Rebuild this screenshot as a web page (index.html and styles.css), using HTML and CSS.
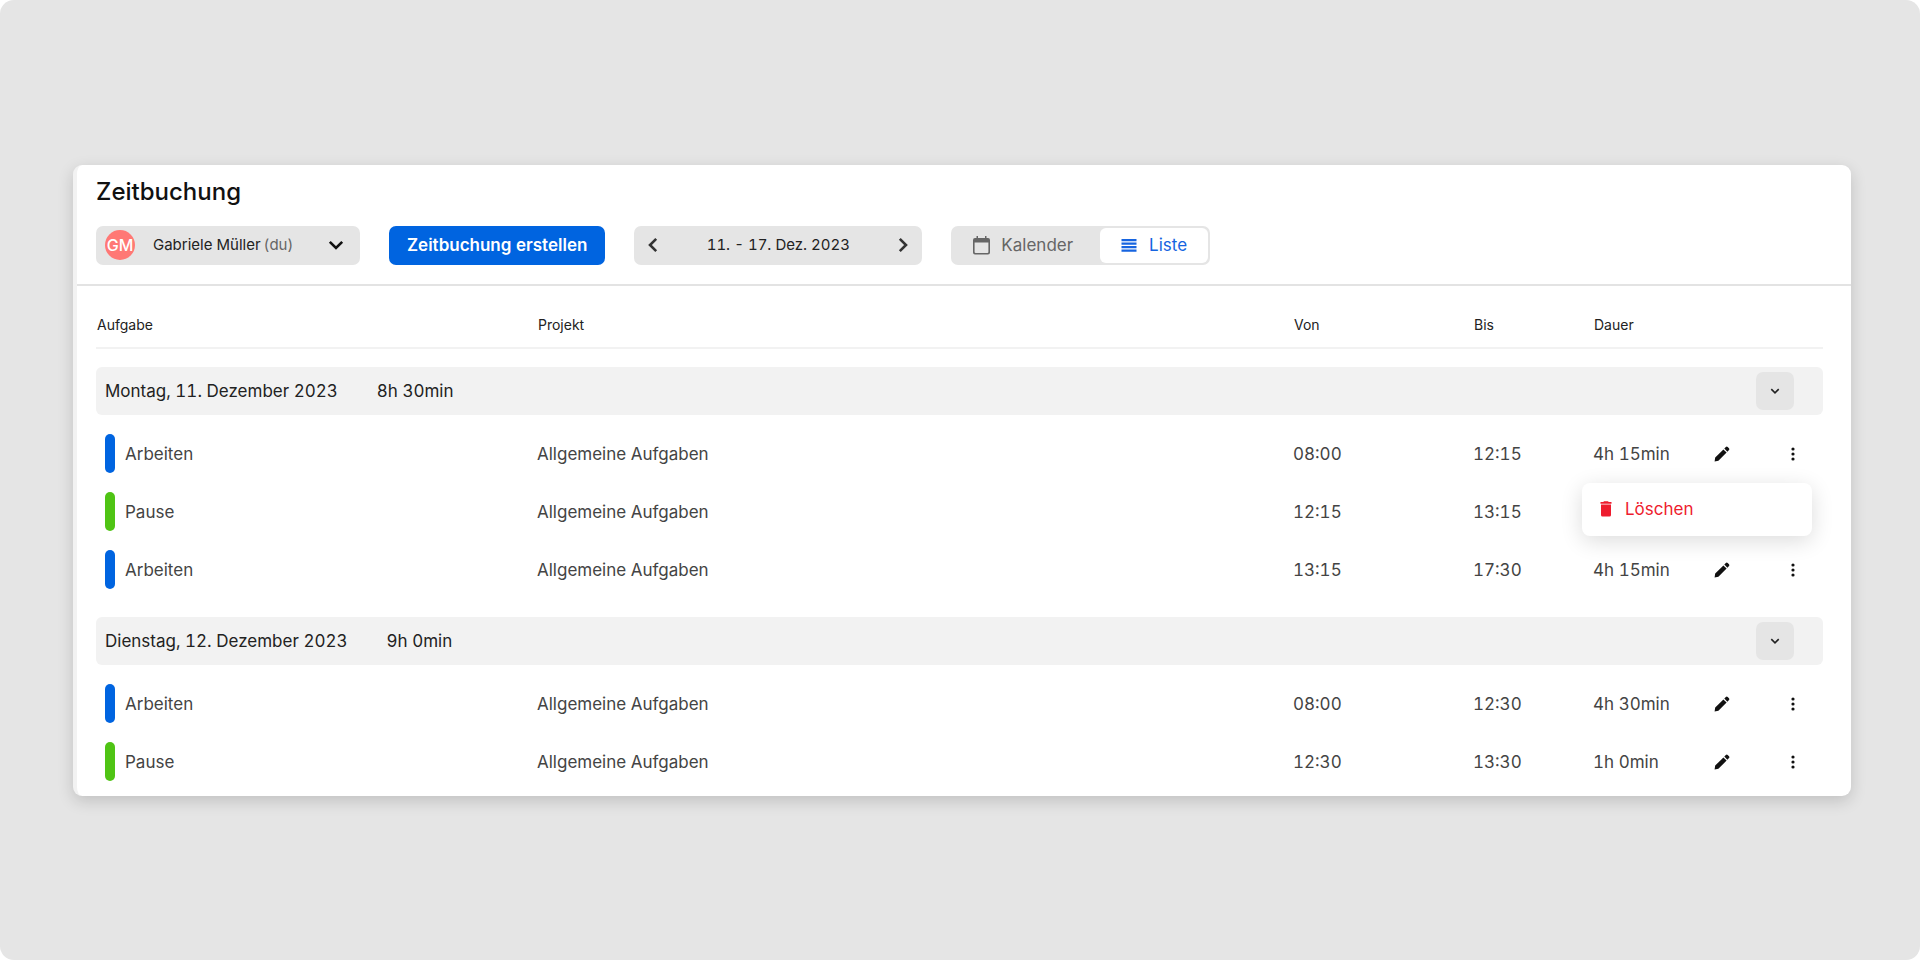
FILE: index.html
```html
<!DOCTYPE html>
<html lang="de">
<head>
<meta charset="utf-8">
<meta name="viewport" content="width=device-width, initial-scale=1">
<title>Zeitbuchung</title>
<link rel="stylesheet" href="styles.css">
</head>
<body>
<svg class="sprite" aria-hidden="true">
  <symbol id="pencil" viewBox="0 0 16 16"><path d="M0.6 15.4 1.2 11.6 9.4 3.4 12.6 6.6 4.4 14.8ZM10.3 2.6 11.9 1Q12.8 0.2 13.7 1L15 2.3Q15.8 3.2 15 4.1L13.4 5.7Z"/></symbol>
  <symbol id="dots" viewBox="0 0 4 14"><circle cx="2" cy="2" r="1.6"/><circle cx="2" cy="7" r="1.6"/><circle cx="2" cy="12" r="1.6"/></symbol>
  <symbol id="chevron" viewBox="0 0 16 10"><path d="M1.8 1.8 8 8 14.2 1.8" fill="none" stroke="currentColor" stroke-width="2.6"/></symbol>
</svg>
<main class="stage">
  <section class="card">
    <header class="top">
      <h1 class="title">Zeitbuchung</h1>
      <div class="toolbar">
        <label class="person">
          <span class="avatar">GM</span>
          <select class="person-select" aria-label="Person"><option>Gabriele Müller</option></select>
          <span class="person-note">(du)</span>
          <svg class="person-arrow"><use href="#chevron"/></svg>
        </label>
        <button class="primary" type="button">Zeitbuchung erstellen</button>
        <div class="week">
          <button class="week-step" type="button" aria-label="Vorherige Woche"><svg viewBox="0 0 10 16"><path d="M8.2 1.8 2 8 8.2 14.2"/></svg></button>
          <span>11. - 17. Dez. 2023</span>
          <button class="week-step" type="button" aria-label="Nächste Woche"><svg viewBox="0 0 10 16"><path d="M1.8 1.8 8 8 1.8 14.2"/></svg></button>
        </div>
        <div class="views">
          <button class="view" type="button" aria-pressed="false">
            <svg class="icon-calendar" viewBox="0 0 17 19"><path d="M3.5 0H5V2H12V0H13.500V2H15Q17 2 17 4V16.500Q17 18.500 15 18.500H2Q0 18.500 0 16.500V4Q0 2 2 2H3.500ZM1.600 6.500V16Q1.600 17 2.600 17H14.400Q15.400 17 15.400 16V6.500Z" fill-rule="evenodd"/></svg>
            Kalender
          </button>
          <button class="view view-active" type="button" aria-pressed="true">
            <svg class="icon-list" viewBox="0 0 15 13"><path d="M0 0H15V2.200H0ZM0 3.500H15V5.700H0ZM0 7H15V9.200H0ZM0 10.500H15V12.700H0Z"/></svg>
            Liste
          </button>
        </div>
      </div>
    </header>
    <div class="list">
      <table class="bookings">
        <colgroup><col class="c-task"><col class="c-project"><col class="c-from"><col class="c-to"><col class="c-length"><col class="c-edit"><col class="c-more"></colgroup>
        <thead>
          <tr><th scope="col">Aufgabe</th><th scope="col">Projekt</th><th scope="col">Von</th><th scope="col">Bis</th><th scope="col">Dauer</th><td></td><td></td></tr>
        </thead>
        <tbody>
          <tr><th class="day-cell" colspan="7" scope="rowgroup"><div class="day"><span>Montag, 11. Dezember 2023</span><span>8h 30min</span><button class="fold" type="button" aria-label="Tag einklappen"><svg><use href="#chevron"/></svg></button></div></th></tr>
          <tr class="entry"><td><div class="task work">Arbeiten</div></td><td>Allgemeine Aufgaben</td><td>08:00</td><td>12:15</td><td>4h 15min</td>
            <td><button class="tool" type="button" aria-label="Bearbeiten"><svg class="icon-pencil"><use href="#pencil"/></svg></button></td>
            <td class="more-cell"><button class="tool" type="button" aria-label="Mehr" aria-expanded="true"><svg class="icon-dots"><use href="#dots"/></svg></button>
              <div class="menu"><button class="menu-item" type="button"><svg class="icon-trash" viewBox="0 0 12 16"><path d="M1 3.600H11V14Q11 15.500 9.500 15.500H2.500Q1 15.500 1 14ZM0.500 1H3.300L4 0.300H8L8.700 1H11.500V2.800H0.500Z"/></svg>Löschen</button></div></td></tr>
          <tr class="entry"><td><div class="task rest">Pause</div></td><td>Allgemeine Aufgaben</td><td>12:15</td><td>13:15</td><td></td><td></td><td></td></tr>
          <tr class="entry"><td><div class="task work">Arbeiten</div></td><td>Allgemeine Aufgaben</td><td>13:15</td><td>17:30</td><td>4h 15min</td>
            <td><button class="tool" type="button" aria-label="Bearbeiten"><svg class="icon-pencil"><use href="#pencil"/></svg></button></td>
            <td><button class="tool" type="button" aria-label="Mehr"><svg class="icon-dots"><use href="#dots"/></svg></button></td></tr>
        </tbody>
        <tbody>
          <tr><th class="day-cell" colspan="7" scope="rowgroup"><div class="day"><span>Dienstag, 12. Dezember 2023</span><span>9h 0min</span><button class="fold" type="button" aria-label="Tag einklappen"><svg><use href="#chevron"/></svg></button></div></th></tr>
          <tr class="entry"><td><div class="task work">Arbeiten</div></td><td>Allgemeine Aufgaben</td><td>08:00</td><td>12:30</td><td>4h 30min</td>
            <td><button class="tool" type="button" aria-label="Bearbeiten"><svg class="icon-pencil"><use href="#pencil"/></svg></button></td>
            <td><button class="tool" type="button" aria-label="Mehr"><svg class="icon-dots"><use href="#dots"/></svg></button></td></tr>
          <tr class="entry"><td><div class="task rest">Pause</div></td><td>Allgemeine Aufgaben</td><td>12:30</td><td>13:30</td><td>1h 0min</td>
            <td><button class="tool" type="button" aria-label="Bearbeiten"><svg class="icon-pencil"><use href="#pencil"/></svg></button></td>
            <td><button class="tool" type="button" aria-label="Mehr"><svg class="icon-dots"><use href="#dots"/></svg></button></td></tr>
        </tbody>
      </table>
    </div>
  </section>
</main>
</body>
</html>
```
FILE: styles.css
```css
* { box-sizing: border-box; }
body { margin: 0; background: #fff; color: #222; font-family: Inter, "Liberation Sans", sans-serif; font-size: 17px; line-height: 24px; font-variant-numeric: tabular-nums; }
button, select { margin: 0; padding: 0; border: 0; background: none; color: inherit; font: inherit; font-variant-numeric: tabular-nums; cursor: pointer; }
svg { display: block; fill: currentColor; }
.sprite { display: none; }

.stage { min-height: 100vh; display: flex; align-items: center; padding: 24px 69px 24px 73px; border-radius: 14px; background: #e5e5e5; }
.card { flex: 1; min-width: 0; border-left: 4px solid #f2f2f2; border-radius: 9px; background: #fff; box-shadow: 0 5px 16px rgba(0, 0, 0, 0.16); }

.top { padding: 11px 19px 19px; border-bottom: 2px solid #e3e3e3; }
.title { margin: 0 0 18px; color: #111; font-size: 24px; line-height: 32px; font-weight: 500; }
.toolbar { display: flex; flex-wrap: wrap; gap: 29px; }
.person, .primary, .week, .views { height: 39px; border-radius: 7px; }
.person, .week, .views { display: flex; align-items: center; background: #e5e5e5; }
.person { width: 264px; padding: 0 16px 0 9px; font-size: 15px; }
.avatar { width: 30px; height: 30px; margin-right: 18px; border-radius: 50%; background: #ff7875; color: #fff; font-size: 16px; line-height: 30px; font-weight: 500; text-align: center; }
.person-select { appearance: none; field-sizing: content; outline: 0; }
.person-note { margin-left: 3px; color: #666; }
.person-arrow { width: 16px; height: 10px; margin-left: auto; color: #111; }
.primary { padding: 0 18px; background: #0064e0; color: #fff; font-weight: 600; }
.week { width: 288px; justify-content: space-between; padding: 0 7px; font-size: 15px; }
.week-step { width: 24px; height: 32px; display: grid; place-items: center; }
.week-step svg { width: 10px; height: 16px; fill: none; stroke: #333; stroke-width: 2.6; }
.views { padding: 2px; color: #666; }
.view { height: 35px; display: flex; align-items: center; gap: 11px; padding: 0 27px 0 20px; border-radius: 6px; }
.view-active { gap: 12px; padding: 0 21px; background: #fff; color: #1664e0; }
.icon-calendar { width: 17px; height: 19px; }
.icon-list { width: 16px; height: 13px; }

.list { padding: 0 28px 5px 19px; }
.bookings { width: 100%; table-layout: fixed; border-collapse: separate; border-spacing: 0; text-align: left; }
.bookings td, .bookings th { padding: 0; }
.c-task { width: 441px; }
.c-from { width: 180px; }
.c-to { width: 120px; }
.c-length { width: 110px; }
.c-edit { width: 38px; }
.c-more { width: 82px; }
.bookings thead th, .bookings thead td { height: 63px; border-bottom: 2px solid #f2f2f2; }
.bookings thead th { padding: 17px 0 0 1px; font-size: 14px; font-weight: 400; vertical-align: middle; }
.bookings .day-cell { padding: 18px 0 10px; font-weight: 400; }
.day { height: 48px; display: flex; align-items: center; gap: 39px; padding: 0 29px 0 9px; border-radius: 6px; background: #f2f2f2; }
.fold { width: 38px; height: 38px; display: grid; place-items: center; margin-left: auto; border-radius: 7px; background: #e5e5e5; }
.fold svg { width: 10px; height: 6px; }
.entry td { height: 58px; color: #444; }
.task { display: flex; align-items: center; gap: 10px; padding-left: 9px; }
.task::before { content: ""; width: 10px; height: 39px; border-radius: 5px; background: #0064e0; }
.rest::before { background: #4fc414; }
.tool { width: 38px; height: 38px; display: grid; place-items: center; color: #111; }
.icon-pencil { width: 16px; height: 16px; }
.icon-dots { width: 4px; height: 14px; }
.more-cell { position: relative; }
.entry td:last-child .tool { margin-left: 33px; }
.menu { position: absolute; z-index: 1; top: 100%; right: 11px; width: 230px; border-radius: 8px; background: #fff; box-shadow: 0 5px 22px rgba(0, 0, 0, 0.14); }
.menu-item { width: 100%; height: 53px; display: flex; align-items: center; gap: 13px; padding-left: 18px; color: #ee1c2e; }
.icon-trash { width: 12px; height: 16px; }
```
